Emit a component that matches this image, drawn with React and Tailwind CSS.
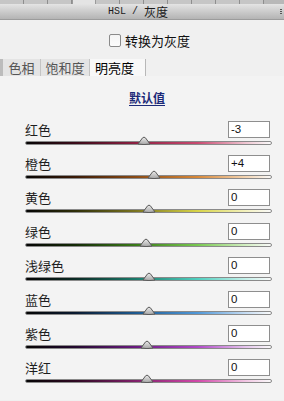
import React from "react";

const rows = [
  { label: "红色", value: "-3", thumb: 143, grad: "linear-gradient(to right,#050505 0%,#3a0a18 20%,#8e2042 45%,#c84a70 70%,#f0c8d4 90%,#fafafa 100%)" },
  { label: "橙色", value: "+4", thumb: 153, grad: "linear-gradient(to right,#050505 0%,#3a1a06 20%,#8a4a14 45%,#d88838 70%,#f4d6b4 90%,#fafafa 100%)" },
  { label: "黄色", value: "0", thumb: 148, grad: "linear-gradient(to right,#050505 0%,#2e2e08 20%,#7a7420 45%,#d8d448 70%,#f4f2c0 90%,#fafafa 100%)" },
  { label: "绿色", value: "0", thumb: 145, grad: "linear-gradient(to right,#050505 0%,#142a06 20%,#3a7a18 45%,#78c850 70%,#d4f0c4 90%,#fafafa 100%)" },
  { label: "浅绿色", value: "0", thumb: 148, grad: "linear-gradient(to right,#050505 0%,#0a2a24 20%,#1a7a6a 45%,#50d0c0 70%,#c8f2ec 90%,#fafafa 100%)" },
  { label: "蓝色", value: "0", thumb: 148, grad: "linear-gradient(to right,#050505 0%,#0a1a30 20%,#1e5a90 45%,#5098d8 70%,#c8def4 90%,#fafafa 100%)" },
  { label: "紫色", value: "0", thumb: 146, grad: "linear-gradient(to right,#050505 0%,#22082e 20%,#6a1a80 45%,#b048c8 70%,#e8c8f0 90%,#fafafa 100%)" },
  { label: "洋红", value: "0", thumb: 146, grad: "linear-gradient(to right,#050505 0%,#2e0822 20%,#80206a 45%,#d048a8 70%,#f2c8e4 90%,#fafafa 100%)" },
];

const cjk = { fontFamily: '"Noto Sans CJK SC", "Noto Sans", sans-serif' };

function Thumb() {
  return (
    <svg width="14" height="9" viewBox="0 0 14 9">
      <defs>
        <linearGradient id="tg" x1="0" y1="0" x2="0" y2="1">
          <stop offset="0" stopColor="#ececec" />
          <stop offset="1" stopColor="#a4a4a4" />
        </linearGradient>
      </defs>
      <path d="M1 8 L5.6 1.8 Q7 0.5 8.4 1.8 L13 8 Q7 9.2 1 8 Z" fill="url(#tg)" stroke="#5a5a5a" strokeWidth="1" />
    </svg>
  );
}

function Row({ r }) {
  return (
    <div className="h-[34px]">
      <div className="flex h-[17px] items-center justify-between pr-[14px]">
        <span className="text-[13px] leading-none text-[#1e1e1e]" style={cjk}>{r.label}</span>
        <div className="flex h-[17px] w-[42px] items-center border border-[#8e8e8e] bg-white pl-[2px] text-[11.5px] leading-none text-[#111]" style={{ fontFamily: '"Liberation Sans", Arial, sans-serif' }}>
          {r.value}
        </div>
      </div>
      <div className="pt-[3px] pr-[12px]">
        <div className="relative h-[4px] rounded-full border border-[#8a8a8a]" style={{ background: r.grad }}>
          <div className="absolute top-[-6px]" style={{ left: r.thumb - 7 - 25 }}>
            <Thumb />
          </div>
        </div>
      </div>
    </div>
  );
}

export default function App() {
  const strip = [0, 25, 50, 76, 100, 124, 148, 172, 196, 220, 244];
  return (
    <div className="relative h-[401px] w-[284px] overflow-hidden bg-[#f0f0f0]">
      {/* top tab strip */}
      <div className="flex h-[4px] bg-[#b8b8b8]">
        {strip.map((x, i) => (
          <div
            key={x}
            className={
              i === 3
                ? "h-[4px] w-[24px] border-x border-[#9a9a9a] bg-[#e4e4e4]"
                : "h-[4px] w-[24px] border-r border-[#8e8e8e] bg-[#c6c6c6]"
            }
          />
        ))}
      </div>
      {/* title bar */}
      <div className="relative flex h-[16px] items-center border-b border-[#9c9c9c] bg-gradient-to-b from-[#e4e4e4] to-[#b4b4b4] pl-[108px] text-[#1a1a1a]">
        <span className="text-[10px] leading-none" style={{ fontFamily: '"Liberation Mono", monospace' }}>HSL /&nbsp;</span>
        <span className="text-[12px] leading-none" style={cjk}>灰度</span>
        <div className="absolute right-[2px] top-[5px] flex flex-col gap-[1px]">
          <div className="h-[1px] w-[2px] bg-[#555]" />
          <div className="h-[1px] w-[2px] bg-[#555]" />
          <div className="h-[1px] w-[2px] bg-[#555]" />
        </div>
      </div>
      {/* checkbox */}
      <div className="mt-[14px] flex h-[13px] items-center gap-[4px] pl-[109px]">
        <div className="h-[13px] w-[12px] rounded-[2px] border border-[#8a8a8a] bg-gradient-to-b from-[#f4f4f4] to-[#fcfcfc]" />
        <span className="text-[13px] leading-none text-[#111]" style={cjk}>转换为灰度</span>
      </div>
      {/* tabs */}
      <div className="mt-[12px] flex h-[17px] items-stretch">
        <div className="w-[3px] bg-[#bcbcbc]" />
        <div className="flex w-[38px] items-center justify-center border-r border-[#c4c4c4] bg-[#e4e4e4] text-[13px] leading-none text-[#555]" style={cjk}>色相</div>
        <div className="flex w-[49px] items-center justify-center border-r border-[#c4c4c4] bg-[#e4e4e4] text-[13px] leading-none text-[#555]" style={cjk}>饱和度</div>
        <div className="flex w-[56px] items-center justify-center border-r border-[#b8b8b8] bg-[#f8f8f8] pr-[6px] text-[13px] leading-none text-[#000]" style={cjk}>明亮度</div>
      </div>
      {/* panel */}
      <div className="h-[324px] bg-[#f3f3f3]">
        <div className="pt-[9px] pl-[129px]">
          <span className="text-[12px] font-semibold leading-[14px] text-[#1c2a78] underline underline-offset-2" style={cjk}>默认值</span>
        </div>
        <div className="mt-[12px] pl-[25px]">
          {rows.map((r) => (
            <Row key={r.label} r={r} />
          ))}
        </div>
      </div>
    </div>
  );
}
